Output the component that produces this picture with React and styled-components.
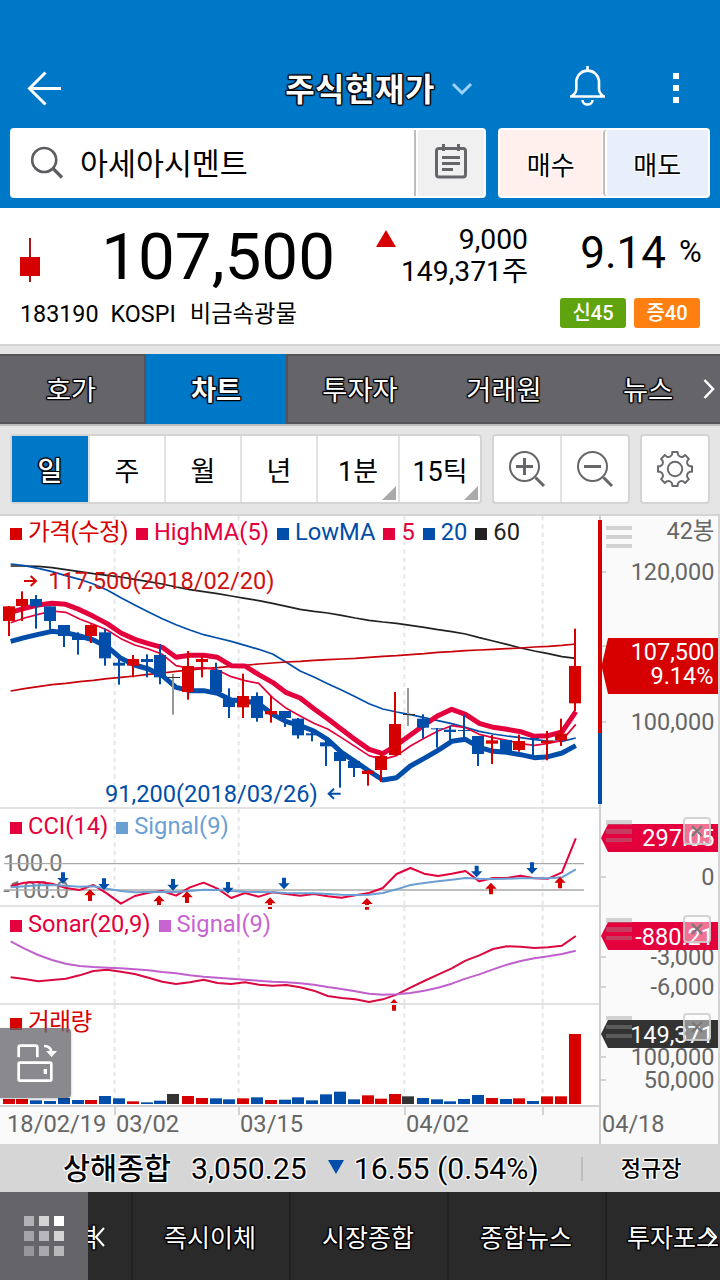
import styled, { createGlobalStyle, css } from 'styled-components'

const GlobalStyle = createGlobalStyle`
  * {
    box-sizing: border-box;
  }
  body {
    margin: 0;
    background: #e5e5e5;
    color: #000;
    font-family: Roboto, "Noto Sans CJK KR", sans-serif;
  }
`

const RED = '#d70000'
const PINK = '#e4003c'
const BLUE = '#004ea9'
const DARK = '#333333'
const PRIMARY = '#0078c8'

const outline = css`
  color: #fff;
  text-shadow: -1px -1px 1px #000, 1px -1px 1px #000, -1px 1px 1px #000,
    1px 1px 1px #000, 0 -1px 1px #000, 0 1px 1px #000, -1px 0 1px #000,
    1px 0 1px #000;
`

const glow = css`
  text-shadow: -1px -1px 1px #fff, 1px -1px 1px #fff, -1px 1px 1px #fff,
    1px 1px 1px #fff, 0 0 2px #fff;
`

const StyledApp = styled.div`
  width: 720px;
  height: 1280px;
  display: flex;
  flex-direction: column;
  overflow: hidden;
`

/* ---------- header ---------- */

const Header = styled.header`
  height: 208px;
  padding-top: 50px;
  background: ${PRIMARY};
`

const TitleBar = styled.div`
  height: 78px;
  padding: 0 39px 0 26px;
  display: grid;
  grid-template-columns: 1fr auto 1fr;
  align-items: center;
`

const Title = styled.h1`
  margin: 2px 0 0 43px;
  padding-left: 8px;
  display: flex;
  align-items: center;
  gap: 16px;
  font-size: 32px;
  line-height: 40px;
  font-weight: 700;
  letter-spacing: 0.5px;
  ${outline}
`

const HeaderActions = styled.div`
  margin-top: -2px;
  display: flex;
  justify-content: flex-end;
  align-items: center;
  gap: 63px;
`

const SearchRow = styled.div`
  display: flex;
  gap: 12px;
  padding: 0 10px;
`

const SearchBox = styled.div`
  width: 476px;
  height: 70px;
  padding: 2px;
  display: flex;
  align-items: center;
  background: #fff;
  border-radius: 4px;

  > svg {
    flex: none;
    margin: 0 16px 0 18px;
  }
`

const Keyword = styled.span`
  flex: 1;
  padding-top: 3px;
  font-size: 30.4px;
  line-height: 63px;
`

const MemoButton = styled.button`
  width: 70px;
  height: 66px;
  padding: 0 0 2px 2px;
  border: 0;
  border-left: 2px solid #bdbdbd;
  background: #f0f0f0;
  background-clip: padding-box;
  box-shadow: inset 2px 0 #fff;
  display: flex;
  align-items: center;
  justify-content: center;
`

const OrderBox = styled.div`
  width: 212px;
  height: 70px;
  padding: 2px;
  display: flex;
  background: #fff;
  border-radius: 4px;
`

const OrderButton = styled.button`
  flex: 1;
  padding: 0;
  border: 0;
  border-radius: 3px;
  background: ${(props) => (props.$sell ? '#e8eefa' : '#fff0ee')};
  color: #000;
  font: inherit;
  font-size: 26px;
  ${glow}

  & + & {
    margin-left: 5px;
    box-shadow: -2px 0 0 #fff, -4px 0 0 #bdbdbd;
  }
`

/* ---------- quote ---------- */

const Quote = styled.section`
  height: 138px;
  background: #fff;
  border-bottom: 2px solid #d4d4d4;
`

const QuoteMain = styled.div`
  height: 91px;
  padding-left: 20px;
  display: flex;
  align-items: flex-start;
`

const MiniCandle = styled.svg`
  margin-top: 30px;
`

const Price = styled.strong`
  width: 295px;
  margin-top: 14px;
  font-size: 65.5px;
  line-height: 70px;
  font-weight: 400;
  text-align: right;
`

const RiseMark = styled.svg`
  margin: 22px 0 0 41px;
`

const Change = styled.div`
  width: 132px;
  margin-top: 16px;
  font-size: 28.3px;
  line-height: 32px;
  text-align: right;
`

const Rate = styled.span`
  width: 138px;
  margin-top: 20px;
  font-size: 44px;
  line-height: 50px;
  text-align: right;
`

const Percent = styled.span`
  margin: 29px 0 0 13px;
  font-size: 31px;
  line-height: 30px;
`

const QuoteInfo = styled.div`
  padding: 0 20px;
  display: flex;
  gap: 12px;
  font-size: 23.3px;
  line-height: 31px;
`

const Sector = styled.span`
  margin-left: 2px;
`

const Badge = styled.span`
  width: 66px;
  height: 30px;
  margin-top: -1px;
  margin-left: ${(props) => (props.$first ? 'auto' : '-4px')};
  border-radius: 3px;
  background: ${(props) => props.$color};
  color: #fff;
  font-size: 20px;
  font-weight: 500;
  line-height: 31px;
  text-align: center;
`

/* ---------- tabs ---------- */

const TabBar = styled.nav`
  position: relative;
  height: 70px;
  margin-top: 8px;
  display: flex;
  flex: none;
  background: #656469;
  box-shadow: inset 0 2px #55555a, inset 0 -2px #55555a, 0 2px #bcbcbc;

  > svg {
    position: absolute;
    right: 5px;
    top: 24px;
  }
`

const Tab = styled.a`
  width: 144px;
  height: 70px;
  padding-top: 2px;
  font-size: 27.3px;
  line-height: 70px;
  text-align: center;
  ${outline}
  font-weight: ${(props) => (props.$active ? 700 : 400)};
  ${(props) =>
    props.$active &&
    css`
      background: ${PRIMARY};
      border: solid #525257;
      border-width: 0 2px;
    `}

  &:first-child {
    padding-right: 2px;
  }
`

/* ---------- toolbar ---------- */

const Toolbar = styled.div`
  height: 90px;
  padding: 10px 10px 0;
  display: flex;
  justify-content: space-between;
  flex: none;
`

const Segment = styled.div`
  height: 70px;
  display: flex;
  background: #fff;
  border: 2px solid #d4d4d4;
  border-radius: 4px;
`

const Period = styled.button`
  position: relative;
  width: ${(props) => props.$width}px;
  padding: 0;
  border: 0;
  border-left: 2px solid #e2e2e2;
  background: none;
  color: #000;
  font: inherit;
  font-size: 27px;

  &:first-child {
    border-left: 0;
  }

  ${(props) =>
    props.$active &&
    css`
      background: ${PRIMARY};
      font-weight: 500;
      ${outline}
    `}

  ${(props) =>
    props.$more &&
    css`
      &::after {
        content: "";
        position: absolute;
        right: 2px;
        bottom: 2px;
        border: solid transparent;
        border-width: 0 0 14px 14px;
        border-bottom-color: #aaa;
      }
    `}
`

const ToolButton = styled.button`
  width: ${(props) => props.$width || 68}px;
  padding: 0;
  border: 0;
  background: none;
  display: flex;
  align-items: center;
  justify-content: center;

  & + & {
    border-left: 2px solid #e2e2e2;
  }
`

/* ---------- chart ---------- */

const ChartArea = styled.section`
  position: relative;
  height: 630px;
  display: flex;
  flex: none;
  border-top: 2px solid #d4d4d4;
  background: #fff;
`

const Plot = styled.div`
  width: 600px;
  display: flex;
  flex-direction: column;
`

const Panel = styled.div`
  position: relative;
  height: ${(props) => props.$height}px;
  padding-left: 10px;
  border-top: ${(props) => (props.$first ? 0 : 2)}px solid #e2e2e2;
`

const PanelSvg = styled.svg`
  position: absolute;
  left: 0;
  top: 0;
  overflow: visible;
`

const Legend = styled.div`
  position: relative;
  padding-top: ${(props) => props.$top}px;
  display: flex;
  gap: 8px;
  font-size: 23.7px;
  line-height: 30px;
`

const LegendItem = styled.span`
  display: flex;
  align-items: center;
  gap: 6px;
  color: ${(props) => props.$color};
  letter-spacing: ${(props) => (props.$tight ? '-0.6px' : 'normal')};

  &::before {
    content: "";
    width: 12px;
    height: 12px;
    margin-top: 4px;
    background: currentColor;
  }
`

const DateAxis = styled.div`
  height: 39px;
  display: flex;
  border-top: 2px solid #d4d4d4;
  background: #fafafa;
`

const DateLabel = styled.span`
  width: ${(props) => props.$width}px;
  padding-left: ${(props) => (props.$start ? 7 : 2)}px;
  background: ${(props) =>
    props.$start
      ? 'none'
      : 'linear-gradient(#d4d4d4, #d4d4d4) 0 0 / 2px 8px no-repeat'};
  color: #666;
  font-size: 23.7px;
  line-height: 34px;
  white-space: nowrap;
`

const Scale = styled.div`
  position: relative;
  width: 120px;
  background: #fafafa;
  border-right: 2px solid #d4d4d4;
`

const ScaleSvg = styled.svg`
  position: absolute;
  left: -4px;
  top: 0;
`

const Grip = styled.i`
  position: absolute;
  left: 6px;
  top: ${(props) => props.$top}px;
  width: 26px;
  height: 22px;
  background: repeating-linear-gradient(
    rgba(150, 150, 150, 0.4) 0 4.5px,
    transparent 4.5px 9px
  );
`

const CloseButton = styled.button`
  position: absolute;
  right: 7px;
  top: ${(props) => props.$top}px;
  width: 28px;
  height: 28px;
  padding: 0;
  border: 2px solid rgba(205, 205, 205, 0.85);
  border-radius: 4px;
  background: rgba(255, 255, 255, 0.45);
  display: flex;
  align-items: center;
  justify-content: center;
`

const RotateButton = styled.button`
  position: absolute;
  left: 0;
  top: 512px;
  width: 71px;
  height: 70px;
  padding: 0;
  border: 0;
  border-radius: 0 4px 4px 0;
  background: rgba(101, 100, 105, 0.76);
  box-shadow: 0 1px 3px rgba(0, 0, 0, 0.25);
`

/* ---------- bottom ---------- */

const IndexBar = styled.div`
  height: 48px;
  display: flex;
  align-items: center;
  flex: none;
  padding: 2px 0 0 63px;
  background: #d6d6d6;
  font-size: 30.2px;
  line-height: 46px;
  white-space: pre;
  ${glow}

  > svg {
    margin: 0 10px 4px 21px;
  }
`

const IndexName = styled.b`
  width: 128px;
  font-size: 29.4px;
  font-weight: 500;
`

const Market = styled.span`
  margin-left: 42px;
  padding-left: 38px;
  border-left: 2px solid #bdbdbd;
  font-size: 22px;
  font-weight: 500;
  line-height: 24px;
`

const BottomNav = styled.nav`
  position: relative;
  height: 88px;
  display: flex;
  flex: none;
  overflow: hidden;
  background: #2a2a2a;
`

const MenuButton = styled.button`
  width: 88px;
  padding: 24px;
  border: 0;
  background: #656469;
  display: grid;
  grid-template-columns: repeat(3, 10px);
  grid-auto-rows: 10px;
  gap: 5px;
  flex: none;
`

const Dot = styled.i`
  background: rgba(255, 255, 255, ${(props) => props.$alpha});
`

const NavItem = styled.a`
  width: ${(props) => props.$width || 158}px;
  padding-left: ${(props) => props.$indent || 0}px;
  padding-right: ${(props) => (props.$clipped ? 33 : 2)}px;
  border-left: ${(props) => (props.$clipped ? 0 : 2)}px solid #222;
  display: flex;
  flex: none;
  justify-content: ${(props) =>
    props.$clipped ? 'flex-end' : props.$indent ? 'flex-start' : 'center'};
  overflow: hidden;
  font-size: 25px;
  line-height: 93px;
  white-space: nowrap;
  ${outline}
`

const NavArrow = styled.svg`
  position: absolute;
  top: 34px;
  left: ${(props) => props.$left}px;
`

// Chart coordinates are thirds of a pixel, 1800 units across the plot.
const UNIT = 3
const STEP = 41.35

const candles = [
  // x, high, top, bottom, low, colour
  [27, 273, 274, 318, 363, RED],
  [66, 229, 252, 273, 318, RED],
  [108, 240, 252, 274, 341, BLUE],
  [150, 274, 274, 318, 352, BLUE],
  [192, 330, 330, 363, 396, BLUE],
  [234, 352, 364, 375, 419, BLUE],
  [273, 328, 330, 363, 384, RED],
  [315, 341, 352, 430, 452, BLUE],
  [357, 430, 443, 452, 509, BLUE],
  [399, 420, 432, 452, 487, RED],
  [441, 418, 432, 441, 487, BLUE],
  [480, 387, 420, 487, 508, BLUE],
  [519, 477, 486, 489, 599, '#999'],
  [564, 408, 453, 531, 554, RED],
  [606, 419, 432, 441, 487, RED],
  [648, 443, 465, 531, 531, BLUE],
  [687, 520, 551, 576, 609, BLUE],
  [729, 476, 543, 577, 609, RED],
  [771, 532, 543, 609, 620, BLUE],
  [813, 543, 588, 598, 623, RED],
  [855, 588, 588, 609, 636, BLUE],
  [894, 609, 611, 661, 671, BLUE],
  [936, 645, 655, 661, 679, BLUE],
  [978, 668, 682, 694, 753, BLUE],
  [1020, 700, 711, 738, 818, BLUE],
  [1062, 735, 738, 759, 786, BLUE],
  [1104, 765, 767, 777, 812, RED],
  [1143, 712, 723, 765, 801, RED],
  [1185, 531, 627, 720, 720, RED],
  [1224, 519, 597, 600, 633, '#999'],
  [1269, 598, 611, 638, 670, BLUE],
  [1311, 639, 640, 643, 698, BLUE],
  [1350, 632, 644, 651, 681, BLUE],
  [1392, 599, 645, 648, 679, BLUE],
  [1434, 663, 663, 717, 753, BLUE],
  [1476, 660, 676, 686, 747, RED],
  [1518, 675, 675, 717, 717, BLUE],
  [1557, 659, 678, 705, 710, RED],
  [1599, 669, 669, 672, 727, BLUE],
  [1641, 648, 677, 684, 736, RED],
  [1683, 611, 656, 676, 693, RED],
  [1725, 341, 453, 565, 588, RED],
]

const priceLines = [
  {
    color: '#222', width: 5,
    data: [153, 153, 154, 158, 164, 170, 176, 181, 186, 193, 200, 207, 216, 224, 230, 236, 243, 250, 257, 265, 274, 283, 289, 294, 301, 309, 316, 321, 325, 331, 337, 344, 350, 357, 368, 378, 388, 399, 408, 416, 425, 430],
  },
  {
    color: BLUE, width: 5,
    data: [147, 152, 160, 170, 182, 193, 207, 225, 248, 270, 291, 311, 329, 345, 359, 369, 379, 391, 403, 417, 442, 468, 486, 506, 525, 545, 566, 582, 591, 599, 608, 617, 626, 637, 649, 657, 663, 668, 674, 678, 679, 669],
  },
  {
    color: '#c8000a', width: 5,
    data: [528, 521, 515, 509, 505, 500, 496, 491, 487, 483, 478, 474, 469, 465, 461, 458, 454, 451, 447, 444, 441, 439, 436, 434, 432, 430, 427, 424, 422, 419, 416, 412, 410, 407, 405, 403, 401, 399, 396, 394, 391, 387],
  },
  {
    color: PINK, width: 5,
    data: [323, 309, 298, 288, 292, 312, 328, 345, 371, 390, 402, 418, 452, 460, 458, 465, 485, 497, 505, 548, 580, 603, 625, 642, 668, 695, 722, 733, 722, 693, 670, 648, 632, 638, 658, 668, 676, 686, 691, 685, 676, 628],
  },
  {
    color: PINK, width: 15,
    data: [292, 280, 270, 265, 268, 284, 304, 326, 354, 373, 386, 397, 427, 421, 421, 427, 452, 453, 479, 502, 533, 549, 581, 611, 643, 674, 703, 716, 690, 660, 630, 602, 583, 598, 625, 637, 643, 650, 664, 662, 651, 590],
  },
  {
    color: BLUE, width: 15,
    data: [379, 368, 358, 349, 353, 363, 375, 395, 430, 450, 462, 482, 517, 527, 527, 535, 555, 558, 566, 598, 620, 632, 648, 674, 712, 740, 768, 795, 788, 753, 730, 706, 679, 673, 697, 709, 712, 719, 728, 725, 714, 692],
  },
]

const cci = [258, 248, 246, 251, 264, 270, 255, 281, 311, 288, 278, 273, 287, 262, 248, 266, 294, 279, 290, 277, 282, 287, 282, 289, 293, 286, 279, 264, 222, 204, 221, 228, 221, 213, 244, 234, 234, 227, 235, 236, 217, 115]
const cciSignal = [262, 259, 256, 255, 257, 260, 259, 266, 273, 277, 276, 275, 276, 273, 269, 270, 273, 275, 276, 277, 279, 280, 280, 282, 284, 285, 284, 279, 268, 255, 249, 244, 239, 234, 236, 237, 236, 235, 235, 235, 232, 208]
const sonar = [532, 537, 544, 540, 536, 526, 513, 509, 515, 522, 533, 545, 552, 547, 539, 549, 552, 547, 554, 557, 555, 562, 572, 588, 594, 598, 606, 598, 584, 563, 543, 524, 505, 482, 466, 447, 439, 440, 444, 442, 437, 408]
const sonarSignal = [424, 446, 465, 480, 491, 498, 501, 503, 505, 508, 511, 516, 520, 526, 530, 533, 536, 539, 542, 545, 547, 550, 554, 561, 567, 574, 581, 584, 583, 579, 572, 563, 551, 536, 523, 508, 494, 483, 475, 469, 462, 452]
const volume = [897, 897, 901, 903, 894, 900, 900, 888, 895, 904, 907, 902, 882, 888, 894, 895, 898, 895, 892, 900, 899, 892, 901, 883, 875, 898, 886, 896, 882, 889, 894, 898, 904, 897, 885, 894, 897, 895, 903, 889, 889, 702]
const volumeColors = 'rrbbbbrbbrbbkrrbbrbrbbbbbbrrrkbbbbbrbrbrrr'
const volumeFill = { r: RED, b: BLUE, k: DARK }

const cciDown = [[189, 252], [312, 270], [519, 272], [684, 281], [852, 268], [1430, 232], [1596, 222]]
const cciUp = [[270, 268], [477, 286], [561, 274], [810, 292], [1101, 294], [1473, 248], [1680, 230]]

const periods = [
  { label: '일', width: 76, active: true },
  { label: '주', width: 76 },
  { label: '월', width: 76 },
  { label: '년', width: 76 },
  { label: '1분', width: 82, more: true },
  { label: '15틱', width: 82, more: true },
]

const tabs = ['호가', '차트', '투자자', '거래원', '뉴스']

const dots = [0.5, 0.72, 1, 0.42, 0.54, 0.72, 0.32, 0.44, 0.54]

const Line = ({ data, color, width = 5 }) => (
  <polyline
    points={data.map((y, i) => `${(32 + STEP * i).toFixed(1)},${y}`).join(' ')}
    fill="none"
    stroke={color}
    strokeWidth={width}
    strokeLinejoin="round"
  />
)

const GridLines = ({ y, height }) => (
  <g stroke="#e6e6e6" strokeWidth="6" strokeDasharray="13 12">
    {[344, 716, 1213, 1628].map((x) => (
      <line key={x} x1={x} x2={x} y1={y} y2={y + height} />
    ))}
  </g>
)

const Graph = ({ y, height, children }) => (
  <PanelSvg
    width="600"
    height={height}
    viewBox={`0 ${y} 1800 ${height * UNIT}`}
    fontSize="70.8"
  >
    <GridLines y={y} height={height * UNIT} />
    {children}
  </PanelSvg>
)

const UpArrow = ({ x, y }) => (
  <path d={`M${x} ${y}l17 18h-11v17h-12v-17h-11z`} fill={RED} />
)

const DownArrow = ({ x, y }) => (
  <path d={`M${x} ${y}l17 -18h-11v-17h-12v17h-11z`} fill={BLUE} />
)

const PriceGraph = () => (
  <Graph y={3} height={291}>
    {priceLines.map((line, i) => (
      <Line key={i} {...line} />
    ))}
    {candles.map(([x, high, top, bottom, low, color]) => (
      <g key={x} fill={color}>
        <rect x={x - 3} y={high} width="6" height={low - high} />
        <rect
          x={x - (color === '#999' ? 15 : 18)}
          y={top}
          width="36"
          height={bottom - top}
          fill={color === '#999' ? '#333' : color}
        />
      </g>
    ))}
    <g fill="none" strokeWidth="6">
      <path d="M72 198H108M92 183L108 198L92 213" stroke={RED} />
      <path d="M1022 836H986M1002 821L986 836L1002 851" stroke={BLUE} />
    </g>
    <text x="145" y="222" fill="#d01010">117,500(2018/02/20)</text>
    <text x="315" y="860" fill={BLUE}>91,200(2018/03/26)</text>
  </Graph>
)

const CciGraph = () => (
  <Graph y={27} height={96}>
    <text x="10" y="212" fill="#777">100.0</text>
    <text x="10" y="293" fill="#777">-100.0</text>
    <path d="M12 191H1752M12 270H1752" stroke="#aaa" strokeWidth="4" />
    <Line data={cci} color={PINK} width={6} />
    <Line data={cciSignal} color="#6b9fd4" width={6} />
    {cciDown.map(([x, y]) => (
      <DownArrow key={x} x={x} y={y} />
    ))}
    {cciUp.map(([x, y]) => (
      <UpArrow key={x} x={x} y={y} />
    ))}
  </Graph>
)

const SonarGraph = () => (
  <Graph y={321} height={96}>
    <Line data={sonar} color="#d80a40" width={6} />
    <Line data={sonarSignal} color="#c060cc" width={6} />
    <UpArrow x={1182} y={597} />
  </Graph>
)

const VolumeGraph = () => (
  <Graph y={615} height={100}>
    {volume.map((y, i) => (
      <rect
        key={i}
        x={candles[i][0] - 18}
        y={y}
        width="36"
        height={912 - y}
        fill={volumeFill[volumeColors[i]]}
      />
    ))}
  </Graph>
)

const scaleLabels = [
  ['42봉', 539],
  ['120,000', 580],
  ['100,000', 730],
  ['0', 885],
  ['-3,000', 965],
  ['-6,000', 995],
  ['100,000', 1065],
  ['50,000', 1088],
]

const PriceScale = () => (
  <Scale>
    <ScaleSvg
      width="122"
      height="628"
      viewBox="596 516 122 628"
      fontSize="23.5"
      textAnchor="end"
    >
      <rect x="599" y="516" width="2" height="628" fill="#d0d0d0" />
      {[572, 646, 722, 877, 957, 987, 1057, 1080].map((y) => (
        <rect key={y} x="601" y={y - 1} width="5" height="2" fill="#d4d4d4" />
      ))}
      <rect x="598" y="520" width="4" height="213" fill={RED} />
      <rect x="598" y="733" width="4" height="71" fill={BLUE} />
      {scaleLabels.map(([label, y]) => (
        <text key={y} x="714.5" y={y} fill="#666">{label}</text>
      ))}
      <path d="M608 638H718V694H608L601.500 666Z" fill={RED} />
      <path d="M608 824H718V852H608L601 838Z" fill={PINK} />
      <path d="M608 922H718V950H608L601 936Z" fill={PINK} />
      <path d="M608 1020H718V1048H608L601 1034Z" fill={DARK} />
      <g fill="#fff">
        <text x="714.5" y="660">107,500</text>
        <text x="713.5" y="684">9.14%</text>
        <text x="714.5" y="846">297.05</text>
        <text x="714" y="944.500">-880.21</text>
        <text x="714" y="1042.500">149,371</text>
      </g>
      <text x="602" y="1132" fill="#666" textAnchor="start">04/18</text>
    </ScaleSvg>
    {[10, 304, 402, 500].map((top) => (
      <Grip key={top} $top={top} />
    ))}
    {[301, 399, 497].map((top) => (
      <CloseButton key={top} $top={top} aria-label="닫기">
        <svg width="12" height="12" stroke="#777" strokeWidth="2">
          <path d="M1 1L11 11M11 1L1 11" />
        </svg>
      </CloseButton>
    ))}
  </Scale>
)

const GearIcon = () => {
  const point = (deg, r) => {
    const a = (deg * Math.PI) / 180
    return `${(20 + r * Math.cos(a)).toFixed(2)} ${(20 + r * Math.sin(a)).toFixed(2)}`
  }
  let d = ''
  for (let i = 0; i < 8; i++) {
    const a = i * 45
    d += `${i ? 'L' : 'M'}${point(a - 11, 15)}L${point(a - 9, 17.2)}L${point(a + 9, 17.2)}L${point(a + 11, 15)}`
    d += `A4 4 0 0 0 ${point(a + 34, 15)}`
  }
  return (
    <svg width="40" height="40" fill="none" stroke="#6a6a6e" strokeWidth="2" strokeLinejoin="round">
      <path d={`${d}Z`} />
      <circle cx="20" cy="20" r="7.2" />
    </svg>
  )
}

const ZoomIcon = ({ plus }) => (
  <svg width="40" height="40" fill="none" stroke="#66666a">
    <circle cx="17.500" cy="17.500" r="14.500" strokeWidth="2" />
    <path d="M28.500 28.500L37 37" strokeWidth="3" />
    <path d={plus ? 'M9 17.500H26M17.500 9V26' : 'M9 17.500H26'} strokeWidth="3" />
  </svg>
)

const App = () => {
  return (
    <StyledApp>
      <GlobalStyle />
      <Header>
        <TitleBar>
          <svg width="38" height="38" fill="none" stroke="#fff" strokeWidth="3">
            <path d="M3 18.500H35M19.500 2.500L3.500 18.500L19.500 34.500" />
          </svg>
          <Title>
            주식현재가
            <svg width="22" height="16" fill="none" stroke="#9ed2ff" strokeWidth="3">
              <path d="M2 2L11 11L20 2" />
            </svg>
          </Title>
          <HeaderActions>
            <svg width="40" height="44" viewBox="568 66 40 44" fill="none" stroke="#fff" strokeWidth="2.600">
              <path d="M570 96.500H605M572 96Q576.300 93 576.300 89V81A11.400 11.400 0 0 1 599 81V89Q599 93 603 96" />
              <path d="M582.500 100A5 4.500 0 0 0 592.500 100" />
              <path d="M587.500 66V70" />
            </svg>
            <svg width="10" height="30" fill="#fff">
              <path d="M2 0h6v6h-6zM2 12h6v6h-6zM2 24h6v6h-6z" />
            </svg>
          </HeaderActions>
        </TitleBar>
        <SearchRow>
          <SearchBox>
            <svg width="34" height="34" fill="none" stroke="#5c5c61" strokeWidth="2.600">
              <circle cx="14.200" cy="14" r="12" />
              <path d="M23 22.500L32 31.500" strokeWidth="3.200" />
            </svg>
            <Keyword>아세아시멘트</Keyword>
            <MemoButton aria-label="메모">
              <svg width="34" height="36" fill="none" stroke="#66666a" strokeWidth="3">
                <rect x="2.500" y="4.500" width="29" height="28.500" rx="2.500" />
                <path d="M9.500 0V7M24.500 0V7M8 13.500H26M8 19.500H26M8 25.500H19" />
              </svg>
            </MemoButton>
          </SearchBox>
          <OrderBox>
            <OrderButton>매수</OrderButton>
            <OrderButton $sell>매도</OrderButton>
          </OrderBox>
        </SearchRow>
      </Header>

      <Quote>
        <QuoteMain>
          <MiniCandle width="20" height="44">
            <rect x="9" width="2" height="44" fill="#a51616" />
            <rect y="19" width="20" height="19" fill={RED} />
          </MiniCandle>
          <Price>107,500</Price>
          <RiseMark width="20" height="17">
            <path d="M10 0L20 17H0Z" fill={RED} />
          </RiseMark>
          <Change>
            <div>9,000</div>
            <div>149,371주</div>
          </Change>
          <Rate>9.14</Rate>
          <Percent>%</Percent>
        </QuoteMain>
        <QuoteInfo>
          <span>183190</span>
          <span>KOSPI</span>
          <Sector>비금속광물</Sector>
          <Badge $first $color="#5fa30f">신45</Badge>
          <Badge $color="#ff7f10">증40</Badge>
        </QuoteInfo>
      </Quote>

      <TabBar>
        {tabs.map((tab) => (
          <Tab key={tab} $active={tab === '차트'}>
            {tab}
          </Tab>
        ))}
        <svg width="12" height="22" fill="none" stroke="#fff" strokeWidth="2.500">
          <path d="M1.500 2L10 11L1.500 20" />
        </svg>
      </TabBar>

      <Toolbar>
        <Segment>
          {periods.map((period) => (
            <Period
              key={period.label}
              $width={period.width}
              $active={period.active}
              $more={period.more}
            >
              {period.label}
            </Period>
          ))}
        </Segment>
        <Segment>
          <ToolButton $width={66}>
            <ZoomIcon plus />
          </ToolButton>
          <ToolButton>
            <ZoomIcon />
          </ToolButton>
        </Segment>
        <Segment>
          <ToolButton $width={66}>
            <GearIcon />
          </ToolButton>
        </Segment>
      </Toolbar>

      <ChartArea>
        <Plot>
          <Panel $first $height={291}>
            <PriceGraph />
            <Legend $top={1}>
              <LegendItem $color={RED} $tight>가격(수정)</LegendItem>
              <LegendItem $color={PINK}>HighMA(5)</LegendItem>
              <LegendItem $color={BLUE}>LowMA</LegendItem>
              <LegendItem $color={PINK}>5</LegendItem>
              <LegendItem $color={BLUE}>20</LegendItem>
              <LegendItem $color="#222">60</LegendItem>
            </Legend>
          </Panel>
          <Panel $height={98}>
            <CciGraph />
            <Legend $top={2}>
              <LegendItem $color={PINK}>CCI(14)</LegendItem>
              <LegendItem $color="#6b9fd4">Signal(9)</LegendItem>
            </Legend>
          </Panel>
          <Panel $height={98}>
            <SonarGraph />
            <Legend $top={2}>
              <LegendItem $color={PINK}>Sonar(20,9)</LegendItem>
              <LegendItem $color="#c864d2">Signal(9)</LegendItem>
            </Legend>
          </Panel>
          <Panel $height={102}>
            <VolumeGraph />
            <Legend $top={2}>
              <LegendItem $color={RED} $tight>거래량</LegendItem>
            </Legend>
          </Panel>
          <DateAxis>
            <DateLabel $start $width={114}>18/02/19</DateLabel>
            <DateLabel $width={124}>03/02</DateLabel>
            <DateLabel $width={166}>03/15</DateLabel>
            <DateLabel $width={138}>04/02</DateLabel>
            <DateLabel $width={58} />
          </DateAxis>
        </Plot>
        <PriceScale />
        <RotateButton aria-label="가로보기">
          <svg width="71" height="70" viewBox="0 684 213 210" fill="none" stroke="#fff" strokeWidth="8">
            <path d="M56 772V742Q56 737 61 737H107Q112 737 112 742V772" />
            <rect x="56" y="788" width="98" height="54" rx="4" />
            <path d="M132 738Q152 738 154 756" />
            <path d="M138 753H171L155 771Z" fill="#fff" stroke="none" />
            <path d="M136 807V822" strokeWidth="10" />
          </svg>
        </RotateButton>
      </ChartArea>

      <IndexBar>
        <IndexName>상해종합</IndexName>
        <span>3,050.25</span>
        <svg width="16" height="14">
          <path d="M0 0H16L8 14Z" fill={BLUE} />
        </svg>
        <span>16.55 (0.54%)</span>
        <Market>정규장</Market>
      </IndexBar>

      <BottomNav>
        <MenuButton aria-label="메뉴">
          {dots.map((alpha, i) => (
            <Dot key={i} $alpha={alpha} />
          ))}
        </MenuButton>
        <NavItem $clipped $width={43}>격</NavItem>
        <NavItem>즉시이체</NavItem>
        <NavItem>시장종합</NavItem>
        <NavItem>종합뉴스</NavItem>
        <NavItem $indent={20}>투자포스</NavItem>
        <NavArrow $left={94} width="12" height="22" fill="none" stroke="#fff" strokeWidth="2">
          <path d="M10 2L2 11L10 20" />
        </NavArrow>
        <NavArrow $left={706} width="12" height="22" fill="none" stroke="#fff" strokeWidth="2">
          <path d="M2 2L10 11L2 20" />
        </NavArrow>
      </BottomNav>
    </StyledApp>
  )
}

export default App
